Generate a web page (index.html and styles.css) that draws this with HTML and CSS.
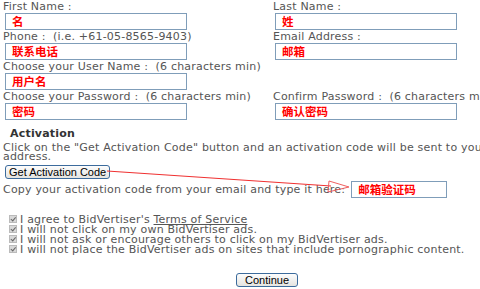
FILE: index.html
```html
<!DOCTYPE html>
<html lang="en">
<head>
    <meta charset="UTF-8">
    <title>Sign Up</title>
    <link rel="stylesheet" href="styles.css">
</head>
<body>
    <div class="page">
        <form class="signup">
            <!-- account fields -->
            <div class="fields">
                <div class="field">
                    <div class="label">First Name :</div>
                    <div class="box">名</div>
                </div>
                <div class="field">
                    <div class="label">Last Name :</div>
                    <div class="box">姓</div>
                </div>
                <div class="field">
                    <div class="label">Phone :&nbsp; (i.e. +61-05-8565-9403)</div>
                    <div class="box">联系电话</div>
                </div>
                <div class="field">
                    <div class="label">Email Address :</div>
                    <div class="box">邮箱</div>
                </div>
                <div class="field">
                    <div class="label">Choose your User Name :&nbsp; (6 characters min)</div>
                    <div class="box">用户名</div>
                </div>
                <div class="field"></div>
                <div class="field">
                    <div class="label">Choose your Password :&nbsp; (6 characters min)</div>
                    <div class="box">密码</div>
                </div>
                <div class="field">
                    <div class="label">Confirm Password :&nbsp; (6 characters min)</div>
                    <div class="box">确认密码</div>
                </div>
            </div>

            <!-- activation -->
            <div class="activation">
                <div class="section-title">Activation</div>
                <p class="note">Click on the "Get Activation Code" button and an activation code will be sent to your email address.</p>
                <button type="button" class="btn btn-code">Get Activation Code</button>
                <div class="code-row">
                    <span>Copy your activation code from your email and type it here:</span>
                    <div class="box box-code">邮箱验证码</div>
                </div>
            </div>

            <!-- terms -->
            <ul class="terms">
                <li><span class="check"></span>I agree to BidVertiser's <u>Terms of Service</u></li>
                <li><span class="check"></span>I will not click on my own BidVertiser ads.</li>
                <li><span class="check"></span>I will not ask or encourage others to click on my BidVertiser ads.</li>
                <li><span class="check"></span>I will not place the BidVertiser ads on sites that include pornographic content.</li>
            </ul>

            <div class="actions">
                <button type="button" class="btn btn-continue">Continue</button>
            </div>
        </form>

        <!-- red arrow drawn over the page -->
        <svg class="arrow" width="480" height="289" viewBox="0 0 480 289">
            <line x1="107" y1="171" x2="331" y2="186" stroke="#f03030" stroke-width="1"/>
            <polygon points="329,181 349,187 328,192" fill="none" stroke="#f06060" stroke-width="1"/>
        </svg>
    </div>
</body>
</html>
```

FILE: styles.css
```css
html, body {
    margin: 0;
    padding: 0;
    background: #fff;
    overflow: hidden;
}

body {
    font-family: "DejaVu Sans", Verdana, sans-serif;
    font-size: 11px;
    letter-spacing: 0.2px;
    color: #555;
}

.page {
    position: relative;
    width: 480px;
    height: 289px;
}

.signup {
    padding: 0 0 0 3px;
}

.fields {
    display: grid;
    grid-template-columns: 270px 210px;
}

.field {
    height: 30px;
}

.label {
    height: 13px;
    line-height: 13px;
    white-space: nowrap;
}

.box {
    height: 15px;
    margin-left: 2px;
    border: 1px solid #7f9db9;
    font-family: "Noto Sans CJK SC", sans-serif;
    font-weight: bold;
    font-size: 11.5px;
    letter-spacing: 0;
    line-height: 15px;
    color: #f00;
    padding-left: 6px;
    width: 174px;
}

.activation {
    margin-top: 6px;
}

.section-title {
    font-weight: bold;
    color: #333;
    padding-left: 7px;
    height: 15px;
    line-height: 15px;
}

.note {
    margin: 0;
    line-height: 9px;
    padding-top: 2px;
    width: 540px;
}

.btn {
    font-family: "Liberation Sans", Arial, sans-serif;
    font-size: 11px;
    letter-spacing: 0;
    color: #000;
    background: linear-gradient(#fdfdfd, #e4e4e0);
    border: 1px solid #3c6b9c;
    border-radius: 3px;
    height: 14px;
    line-height: 12px;
    white-space: nowrap;
    padding: 0 3px;
}

.btn-code {
    display: block;
    margin: 4px 0 0 2px;
}

.code-row {
    display: flex;
    align-items: center;
    margin-top: 2px;
    height: 17px;
    line-height: 13px;
    white-space: nowrap;
}

.box-code {
    width: 88px;
    margin-left: 6px;
}

.terms {
    list-style: none;
    margin: 17px 0 0 0;
    padding: 0 0 0 6px;
}

.terms li {
    height: 10px;
    line-height: 10px;
    white-space: nowrap;
}

.check {
    display: inline-block;
    width: 6px;
    height: 6px;
    margin-right: 3px;
    border: 0.5px solid #bbb;
    background: #d8d8d8;
    position: relative;
}

.check::after {
    content: "";
    position: absolute;
    left: 2px;
    top: 0;
    width: 1.5px;
    height: 3.5px;
    border: solid #666;
    border-width: 0 1.5px 1.5px 0;
    transform: rotate(40deg);
}

.actions {
    margin-top: 18px;
    padding-left: 233px;
}

.btn-continue {
    width: 62px;
    padding: 0;
}

.arrow {
    position: absolute;
    left: 0;
    top: 0;
    pointer-events: none;
}
```
